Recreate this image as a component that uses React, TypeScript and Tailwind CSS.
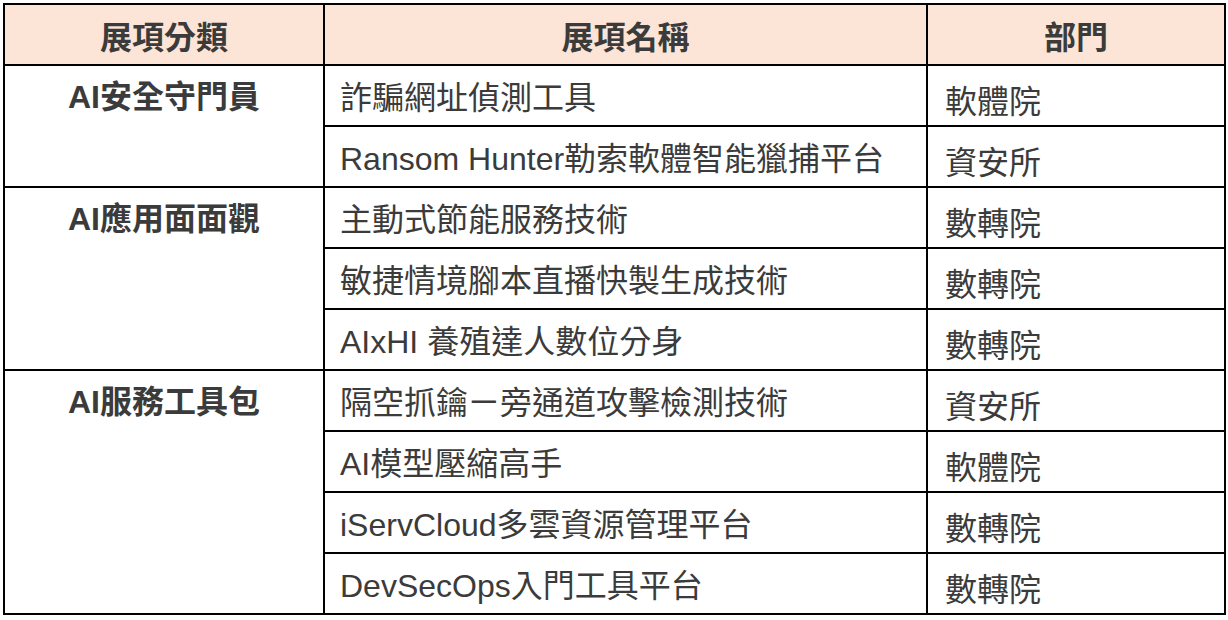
import React from "react";

type Item = { name: string; dept: string };
type Group = { cat: string; items: Item[] };

const groups: Group[] = [
  {
    cat: "AI安全守門員",
    items: [
      { name: "詐騙網址偵測工具", dept: "軟體院" },
      { name: "Ransom Hunter勒索軟體智能獵捕平台", dept: "資安所" },
    ],
  },
  {
    cat: "AI應用面面觀",
    items: [
      { name: "主動式節能服務技術", dept: "數轉院" },
      { name: "敏捷情境腳本直播快製生成技術", dept: "數轉院" },
      { name: "AIxHI 養殖達人數位分身", dept: "數轉院" },
    ],
  },
  {
    cat: "AI服務工具包",
    items: [
      { name: "隔空抓鑰ㄧ旁通道攻擊檢測技術", dept: "資安所" },
      { name: "AI模型壓縮高手", dept: "軟體院" },
      { name: "iServCloud多雲資源管理平台", dept: "數轉院" },
      { name: "DevSecOps入門工具平台", dept: "數轉院" },
    ],
  },
];

export default function App() {
  return (
    <div className="w-[1228px] h-[620px] bg-white pt-[3px] pl-[3px] font-['Liberation_Sans','Noto_Sans_CJK_TC',sans-serif] text-[#3b3b3b] text-[32px] leading-none">
      <div className="w-[1223px] border-2 border-black">
        <div className="flex h-[59px] bg-[#fce4d6] font-bold">
          <div className="w-[320px] border-r-2 border-black flex items-center justify-center pt-[6px]">展項分類</div>
          <div className="w-[603px] border-r-2 border-black flex items-center justify-center pt-[6px]">展項名稱</div>
          <div className="flex-1 flex items-center justify-center pt-[6px]">部門</div>
        </div>
        {groups.map((g) => (
          <div key={g.cat} className="flex border-t-2 border-black">
            <div className="w-[320px] border-r-2 border-black">
              <div className="h-[59px] flex items-center justify-center font-bold pt-[3px]">{g.cat}</div>
            </div>
            <div className="flex-1 flex flex-col">
              {g.items.map((it, i) => (
                <div
                  key={it.name}
                  className={i === 0 ? "flex h-[59px]" : "flex h-[61px] border-t-2 border-black"}
                >
                  <div className="w-[603px] border-r-2 border-black flex items-center pl-[15px] pt-[4px]">{it.name}</div>
                  <div className="flex-1 flex items-center pl-[17px] pt-[12px]">{it.dept}</div>
                </div>
              ))}
            </div>
          </div>
        ))}
      </div>
    </div>
  );
}
